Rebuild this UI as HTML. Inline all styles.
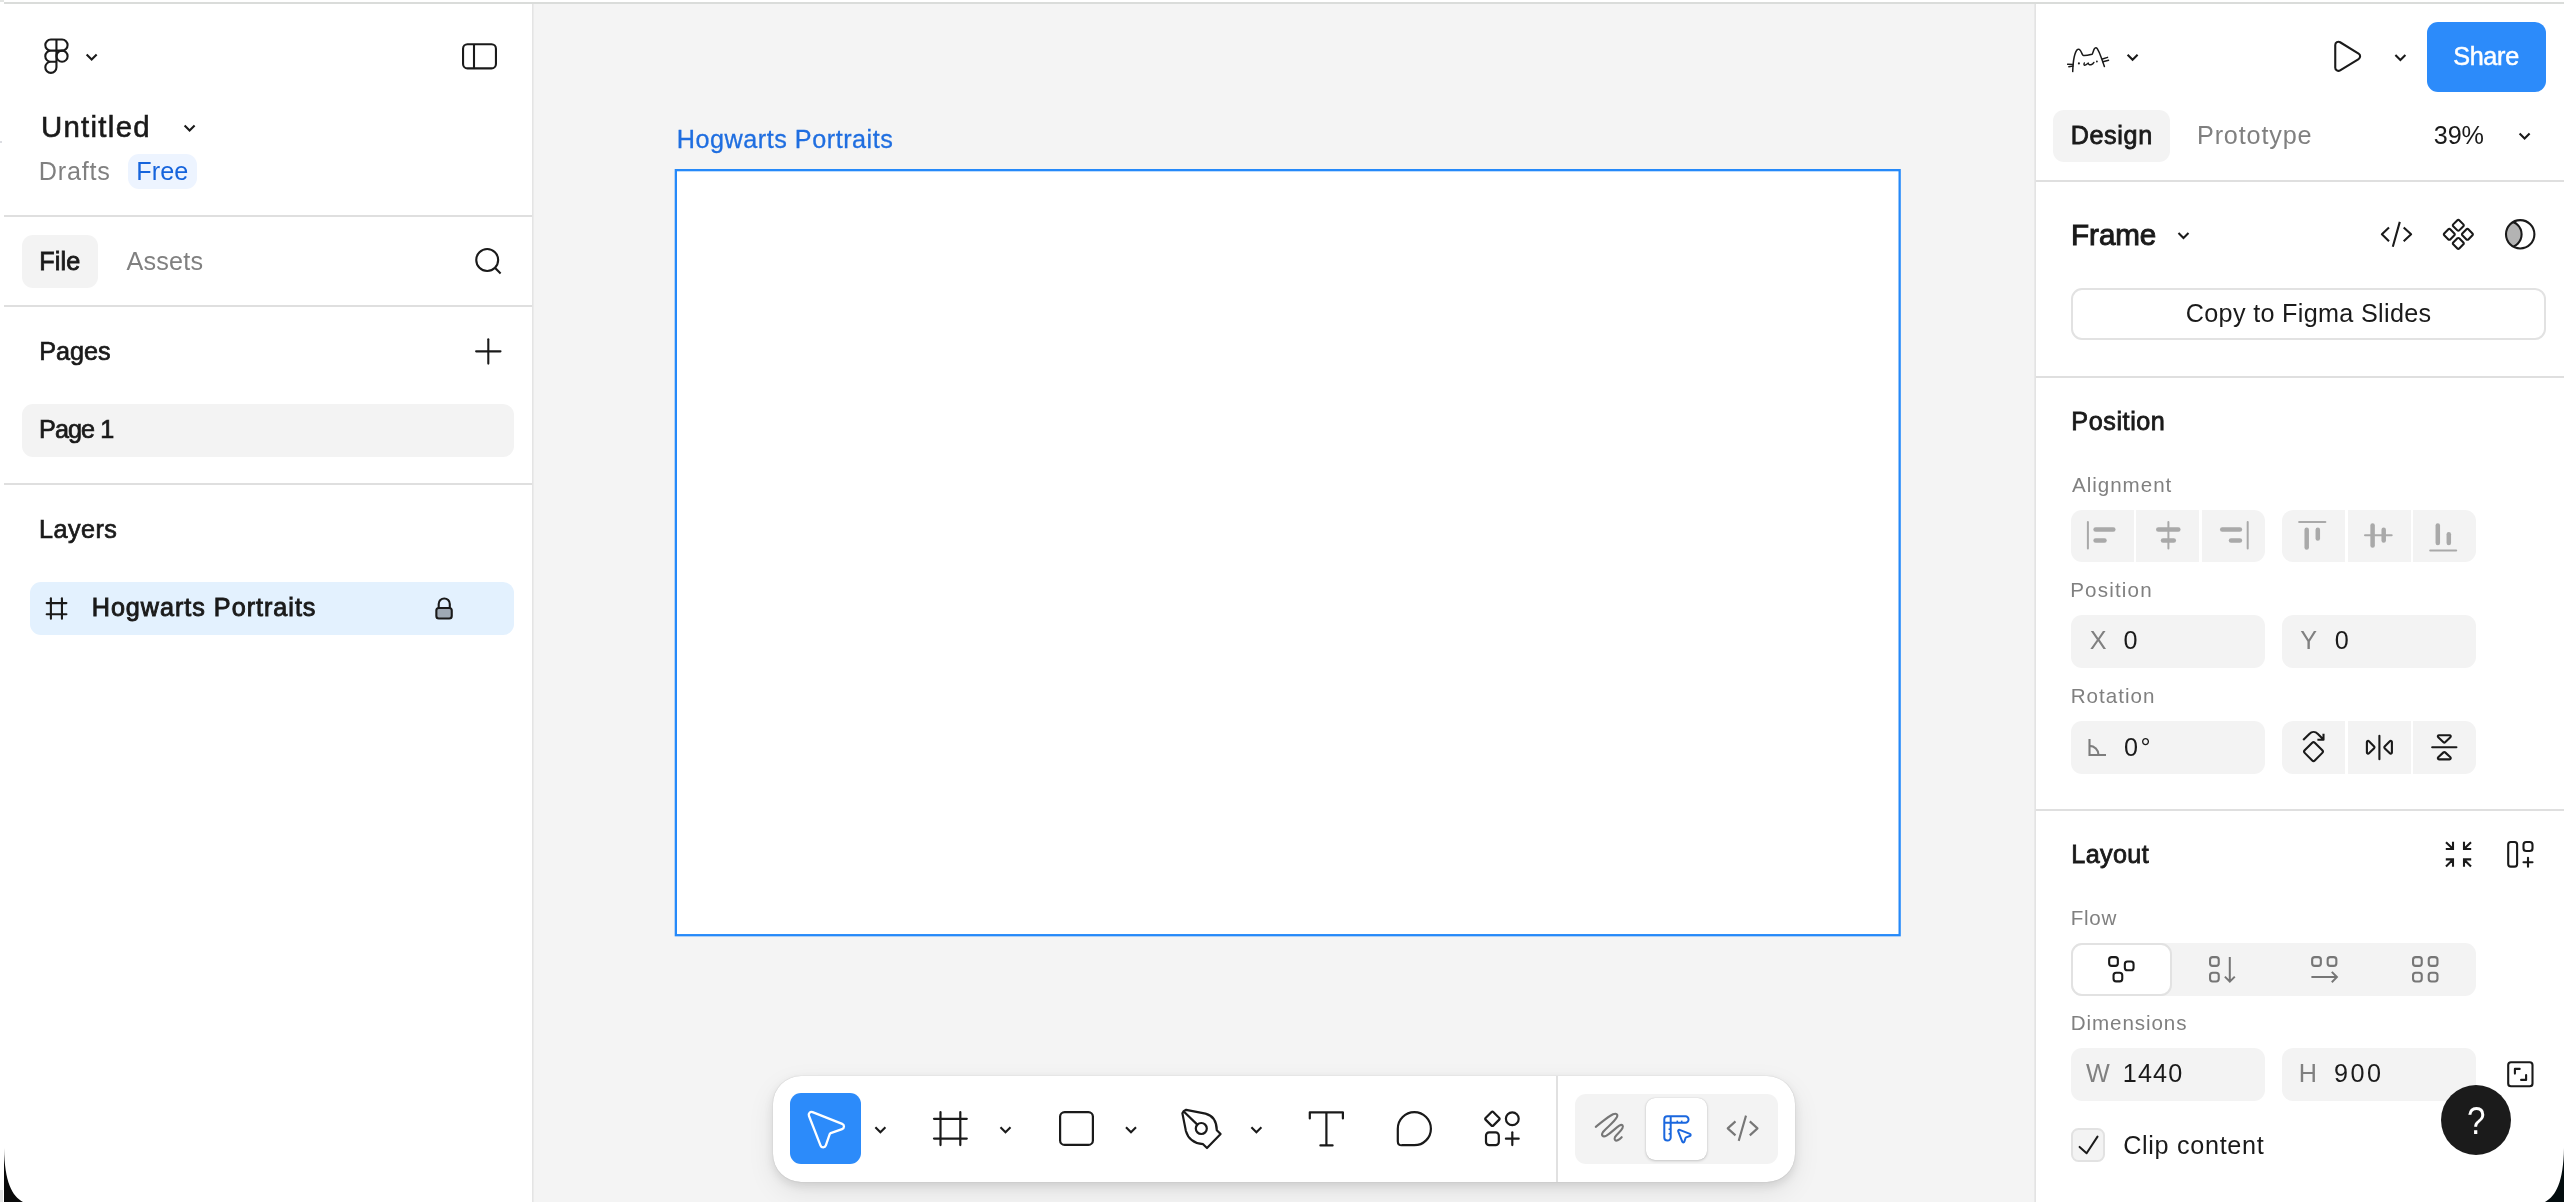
<!DOCTYPE html>
<html lang="en"><head><meta charset="utf-8"><title>Untitled – Figma</title>
<style>
html,body{margin:0;padding:0;}
body{width:2564px;height:1202px;overflow:hidden;background:#fff;position:relative;font-family:'Liberation Sans',sans-serif;}
.b{position:absolute;}
.t{position:absolute;white-space:pre;font-family:'Liberation Sans',sans-serif;}
#tx{position:absolute;left:0;top:0;width:2564px;height:1202px;will-change:transform;}
svg.ic{position:absolute;left:0;top:0;width:2564px;height:1202px;overflow:visible;}
</style></head><body>
<div class="b" style="left:534px;top:4px;width:1500px;height:1198px;background:#f4f4f4;"></div>
<div class="b" style="left:4px;top:2px;width:2560px;height:2px;background:#dadcda;"></div>
<div class="b" style="left:0px;top:0px;width:4px;height:2px;background:#e3e5e3;"></div>
<div class="b" style="left:0px;top:141px;width:2px;height:2px;background:#dcdde2;"></div>
<div class="b" style="left:0px;top:1190px;width:3px;height:12px;background:#e4e4e4;"></div>
<div class="b" style="left:532px;top:4px;width:1px;height:1198px;background:#e4e4e4;"></div>
<div class="b" style="left:533px;top:4px;width:1px;height:1198px;background:#ebebeb;"></div>
<div class="b" style="left:2034px;top:4px;width:1px;height:1198px;background:#e9e9e9;"></div>
<div class="b" style="left:2035px;top:4px;width:1px;height:1198px;background:#e3e3e3;"></div>
<div class="b" style="left:4px;top:215px;width:528px;height:2px;background:#dfdfdf;"></div>
<div class="b" style="left:4px;top:305px;width:528px;height:2px;background:#dfdfdf;"></div>
<div class="b" style="left:4px;top:483px;width:528px;height:2px;background:#dfdfdf;"></div>
<div class="b" style="left:128.2px;top:154.2px;width:68.6px;height:34.7px;background:#edf4ff;border-radius:11px;"></div>
<div class="b" style="left:22px;top:235px;width:76px;height:53px;background:#f3f3f3;border-radius:11px;"></div>
<div class="b" style="left:22px;top:404px;width:492px;height:53px;background:#f3f3f3;border-radius:11px;"></div>
<div class="b" style="left:30px;top:582px;width:484px;height:53px;background:#e3f1fe;border-radius:11px;"></div>
<div class="b" style="left:675px;top:169px;width:1226px;height:767px;background:#fff;"></div>
<div class="b" style="left:773px;top:1076px;width:1022px;height:106px;background:#fff;border-radius:28px;box-shadow:0 0 1px rgba(0,0,0,.25),0 4px 10px rgba(0,0,0,.10),0 10px 28px rgba(0,0,0,.08);"></div>
<div class="b" style="left:790px;top:1093.2px;width:71px;height:71px;background:#2c8bfa;border-radius:11px;"></div>
<div class="b" style="left:1556px;top:1076px;width:2px;height:106px;background:#e1e1e1;"></div>
<div class="b" style="left:1575px;top:1093.5px;width:203px;height:70.5px;background:#f3f3f3;border-radius:11px;"></div>
<div class="b" style="left:1646px;top:1098px;width:61px;height:62px;background:#fff;border-radius:9px;box-shadow:0 1px 3px rgba(0,0,0,.18),0 0 1px rgba(0,0,0,.2);"></div>
<div class="b" style="left:2036px;top:180px;width:528px;height:2px;background:#dfdfdf;"></div>
<div class="b" style="left:2036px;top:376px;width:528px;height:2px;background:#dfdfdf;"></div>
<div class="b" style="left:2036px;top:809px;width:528px;height:2px;background:#dfdfdf;"></div>
<div class="b" style="left:2427px;top:22px;width:119px;height:70px;background:#2c8bfa;border-radius:11px;"></div>
<div class="b" style="left:2053px;top:110px;width:117px;height:52px;background:#f3f3f3;border-radius:11px;"></div>
<div class="b" style="left:2071px;top:288px;width:475px;height:52px;background:#fff;border-radius:11px;border:2px solid #e2e2e2;box-sizing:border-box;"></div>
<div class="b" style="left:2071px;top:510px;width:194px;height:52px;background:#f3f3f3;border-radius:11px;"></div>
<div class="b" style="left:2282px;top:510px;width:194px;height:52px;background:#f3f3f3;border-radius:11px;"></div>
<div class="b" style="left:2133.8px;top:510px;width:2.2px;height:52px;background:#fff;"></div>
<div class="b" style="left:2199px;top:510px;width:3px;height:52px;background:#fff;"></div>
<div class="b" style="left:2345px;top:510px;width:2.9px;height:52px;background:#fff;"></div>
<div class="b" style="left:2410.9px;top:510px;width:2.3px;height:52px;background:#fff;"></div>
<div class="b" style="left:2071px;top:615px;width:194px;height:53px;background:#f3f3f3;border-radius:11px;"></div>
<div class="b" style="left:2282px;top:615px;width:194px;height:53px;background:#f3f3f3;border-radius:11px;"></div>
<div class="b" style="left:2071px;top:721px;width:194px;height:52.7px;background:#f3f3f3;border-radius:11px;"></div>
<div class="b" style="left:2282px;top:721px;width:194px;height:52.7px;background:#f3f3f3;border-radius:11px;"></div>
<div class="b" style="left:2345px;top:721px;width:2.9px;height:53px;background:#fff;"></div>
<div class="b" style="left:2410.9px;top:721px;width:2.3px;height:53px;background:#fff;"></div>
<div class="b" style="left:2071px;top:943px;width:405px;height:53px;background:#f3f3f3;border-radius:11px;"></div>
<div class="b" style="left:2071px;top:943px;width:100.7px;height:53px;background:#fff;border-radius:11px;border:2px solid #e2e2e2;box-sizing:border-box;"></div>
<div class="b" style="left:2071px;top:1048px;width:194px;height:53px;background:#f3f3f3;border-radius:11px;"></div>
<div class="b" style="left:2282px;top:1048px;width:194px;height:53px;background:#f3f3f3;border-radius:11px;"></div>
<div class="b" style="left:2071px;top:1128px;width:34.4px;height:34.4px;background:#f3f3f3;border-radius:7.5px;border:2px solid #e2e2e2;box-sizing:border-box;"></div>
<div class="b" style="left:2441px;top:1085px;width:70px;height:70px;background:#1b1b1b;border-radius:35px;"></div>
<svg class="ic" viewBox="0 0 2564 1202" fill="none" stroke-linecap="round" stroke-linejoin="round">
<rect x="675.85" y="170.15" width="1223.8" height="765.05" stroke="#2589f9" stroke-width="2.3" stroke-linejoin="miter"/>
<path d="M56.45,39.55 H50.849999999999994 A5.55,5.55 0 0 0 50.849999999999994,50.65 H56.45 M56.45,39.55 H62.05 A5.55,5.55 0 0 1 62.05,50.65 H56.45 M56.45,50.65 H50.849999999999994 A5.55,5.55 0 0 0 50.849999999999994,61.75 H56.45 M56.45,61.75 H50.849999999999994 A5.55,5.55 0 0 0 50.849999999999994,72.85 A5.55,5.55 0 0 0 56.45,67.3 V39.55" stroke="#1a1a1a" stroke-width="2.1" fill="none" />
<circle cx="62.05" cy="56.2" r="5.55" stroke="#1a1a1a" stroke-width="2.1"/>
<path d="M86.65,54.40 L91.65,59.40 L96.65,54.40" stroke="#1a1a1a" stroke-width="2.1" fill="none" stroke-linecap="butt" stroke-linejoin="miter"/>
<rect x="463.05" y="44.3" width="32.9" height="24.1" rx="4.4" stroke="#1a1a1a" stroke-width="2.1"/>
<path d="M474,44.3 L474,68.4" stroke="#1a1a1a" stroke-width="2.1" stroke-linecap="butt"/>
<path d="M184.60,125.40 L189.60,130.40 L194.60,125.40" stroke="#1a1a1a" stroke-width="2.1" fill="none" stroke-linecap="butt" stroke-linejoin="miter"/>
<circle cx="487.2" cy="260" r="10.95" stroke="#1a1a1a" stroke-width="2.1"/>
<path d="M494.9,267.7 L500.6,273.4" stroke="#1a1a1a" stroke-width="2.1" stroke-linecap="butt"/>
<path d="M476.1,351.35 L500.5,351.35" stroke="#1a1a1a" stroke-width="2.1" stroke-linecap="round"/>
<path d="M488.3,339.2 L488.3,363.6" stroke="#1a1a1a" stroke-width="2.1" stroke-linecap="round"/>
<path d="M50.9,598.2 L50.9,618.7" stroke="#1a1a1a" stroke-width="2.1" stroke-linecap="round"/>
<path d="M61.95,598.2 L61.95,618.7" stroke="#1a1a1a" stroke-width="2.1" stroke-linecap="round"/>
<path d="M46.7,603.1 L66.4,603.1" stroke="#1a1a1a" stroke-width="2.1" stroke-linecap="round"/>
<path d="M46.7,614.2 L66.4,614.2" stroke="#1a1a1a" stroke-width="2.1" stroke-linecap="round"/>
<path d="M438.7,608 V604 A5.55,5.55 0 0 1 449.8,604 V608" stroke="#1a1a1a" stroke-width="2.1" fill="none" />
<rect x="436.35" y="608" width="15.4" height="10.5" rx="2.5" stroke="#1a1a1a" stroke-width="2.1" fill="#9fa9b4"/>
<path d="M808.93,1115.78 A2.80,2.80 0 0 1 812.57,1112.15 L842.20,1123.84 A2.80,2.80 0 0 1 842.10,1129.09 L830.71,1133.07 A1.60,1.60 0 0 0 829.73,1134.07 L825.83,1145.47 A2.80,2.80 0 0 1 820.57,1145.58 Z" stroke="#fff" stroke-width="2.3" fill="none" />
<path d="M875.40,1127.30 L880.40,1132.30 L885.40,1127.30" stroke="#1a1a1a" stroke-width="2.1" fill="none" stroke-linecap="butt" stroke-linejoin="miter"/>
<path d="M1000.50,1127.30 L1005.50,1132.30 L1010.50,1127.30" stroke="#1a1a1a" stroke-width="2.1" fill="none" stroke-linecap="butt" stroke-linejoin="miter"/>
<path d="M1126.00,1127.30 L1131.00,1132.30 L1136.00,1127.30" stroke="#1a1a1a" stroke-width="2.1" fill="none" stroke-linecap="butt" stroke-linejoin="miter"/>
<path d="M1251.40,1127.30 L1256.40,1132.30 L1261.40,1127.30" stroke="#1a1a1a" stroke-width="2.1" fill="none" stroke-linecap="butt" stroke-linejoin="miter"/>
<path d="M940.5,1112.1 L940.5,1145.1" stroke="#1a1a1a" stroke-width="2.2" stroke-linecap="round"/>
<path d="M960.3,1112.1 L960.3,1145.1" stroke="#1a1a1a" stroke-width="2.2" stroke-linecap="round"/>
<path d="M934,1118.8 L966.8,1118.8" stroke="#1a1a1a" stroke-width="2.2" stroke-linecap="round"/>
<path d="M934,1138.6 L966.8,1138.6" stroke="#1a1a1a" stroke-width="2.2" stroke-linecap="round"/>
<rect x="1060.1" y="1112.1" width="32.8" height="32.8" rx="4.5" stroke="#1a1a1a" stroke-width="2.2"/>
<path d="M1183.6,1111.2 L1186.2,1109.8 L1205.5,1113.6 C1212.5,1115.3 1216.6,1121.5 1216.8,1130.2 L1220.6,1134 L1207,1148 L1203.1,1144.2 C1194,1143.4 1188,1138.5 1185.9,1131 L1182.4,1113.4 Z" stroke="#1a1a1a" stroke-width="2.2" fill="none" />
<circle cx="1201.3" cy="1128.5" r="5.5" stroke="#1a1a1a" stroke-width="2.2"/>
<path d="M1184,1111.8 L1197.3,1124.6" stroke="#1a1a1a" stroke-width="2.2" stroke-linecap="butt"/>
<path d="M1309.8,1118.4 V1112.3 H1342.9 V1118.4 M1326.4,1112.3 V1145.4 M1320.4,1145.4 H1332.6" stroke="#1a1a1a" stroke-width="2.2" fill="none" />
<path d="M1397.8,1128.65 A16.550000000000068,16.550000000000068 0 1 1 1414.35,1145.2000000000003 H1402.3 Q1397.8,1145.7 1397.8,1141.2 Z" stroke="#1a1a1a" stroke-width="2.2" fill="none" />
<path d="M1491.55,1111.95 A1.20,1.20 0 0 1 1493.25,1111.95 L1499.25,1117.95 A1.20,1.20 0 0 1 1499.25,1119.65 L1493.25,1125.65 A1.20,1.20 0 0 1 1491.55,1125.65 L1485.55,1119.65 A1.20,1.20 0 0 1 1485.55,1117.95 Z" stroke="#1a1a1a" stroke-width="2.2" fill="none" />
<circle cx="1512.3" cy="1118.8" r="6.4" stroke="#1a1a1a" stroke-width="2.2"/>
<rect x="1486.00" y="1132.30" width="12.8" height="12.8" rx="3.2" stroke="#1a1a1a" stroke-width="2.2" fill="none"/>
<path d="M1505.9,1138.7 L1518.7,1138.7" stroke="#1a1a1a" stroke-width="2.2" stroke-linecap="round"/>
<path d="M1512.3,1132.3 L1512.3,1145.1" stroke="#1a1a1a" stroke-width="2.2" stroke-linecap="round"/>
<path d="M1595.8,1126.8 C1602,1122 1608,1116.5 1613,1114.2 C1616.5,1112.8 1618.2,1114.5 1616.8,1117.3 C1614,1122.5 1607,1127 1603,1132 C1600.8,1135.2 1602.8,1137.6 1606.5,1135.6 C1611,1133 1615,1128.5 1619.3,1125.6 C1622.3,1123.8 1623.6,1125.8 1622.4,1128.2 C1620.6,1131.7 1616.6,1134 1614.9,1137.3 C1613.8,1139.8 1615.6,1141.3 1617.6,1140.3 C1619.2,1139.5 1620.5,1138.4 1621.7,1137.2" stroke="#767676" stroke-width="2.1" fill="none" />
<path d="M1667.3,1116.3 H1685.5 A3,3 0 0 1 1688.5,1119.3 V1119.7 A3,3 0 0 1 1685.5,1122.7 H1670.7 V1137.5 A3,3 0 0 1 1667.7,1140.5 H1667.3 A3,3 0 0 1 1664.3,1137.5 V1119.3 A3,3 0 0 1 1667.3,1116.3 Z M1670.7,1116.3 V1122.7 H1664.3" stroke="#1a67de" stroke-width="2.0" fill="none" />
<path d="M1677.3,1122.7 L1677.3,1120.6" stroke="#1a67de" stroke-width="1.6" stroke-linecap="butt"/>
<path d="M1681.7,1122.7 L1681.7,1120.6" stroke="#1a67de" stroke-width="1.6" stroke-linecap="butt"/>
<path d="M1670.7,1129.2 L1668.6,1129.2" stroke="#1a67de" stroke-width="1.6" stroke-linecap="butt"/>
<path d="M1670.7,1133.8 L1668.6,1133.8" stroke="#1a67de" stroke-width="1.6" stroke-linecap="butt"/>
<path d="M1678.21,1131.30 A1.10,1.10 0 0 1 1679.63,1129.87 L1689.96,1133.94 A1.10,1.10 0 0 1 1689.92,1136.01 L1686.07,1137.35 A0.70,0.70 0 0 0 1685.64,1137.79 L1684.33,1141.64 A1.10,1.10 0 0 1 1682.26,1141.68 Z" stroke="#1a67de" stroke-width="2.0" fill="none" />
<path d="M1735.5,1121.4 L1727.7,1128.4 L1735.5,1135.4 M1749.8,1121.4 L1757.5,1128.4 L1749.8,1135.4 M1746,1115.6 L1738.7,1140.9" stroke="#767676" stroke-width="2.1" fill="none" stroke-linecap="butt" stroke-linejoin="round"/>
<path d="M2072.7,71.6 C2072.9,66 2073.2,61.5 2074.2,57 C2075,53.5 2076,50.8 2077.3,49.6 C2078.6,48.6 2080,49.6 2081,51.5 C2081.8,53 2082.2,54.6 2083,55.3 C2084.5,56 2089,55 2092.2,54.3 C2093,52.5 2093.6,50 2094.3,48.8 C2095.2,47.3 2096.4,47.3 2097.4,48.8 C2099.5,52.3 2100.5,55.5 2101.5,58.2 C2102.7,61.5 2103.6,64.2 2104.4,66.6" stroke="#1a1a1a" stroke-width="1.5" fill="none" />
<path d="M2067.6,64.3 L2073,64.4 M2068.8,66.7 L2073,66 M2102.4,59 L2107.6,57.3 M2102.9,61.7 L2108.6,60.2" stroke="#1a1a1a" stroke-width="1.4" fill="none" />
<path d="M2084.3,63 C2083.6,64.6 2084,65.6 2085.2,65.2 C2086.6,64.7 2087.5,63.6 2088.3,63.1 C2088.6,64.6 2089.6,65 2091,64.7 C2092.5,64.3 2093.4,63.4 2093.9,62.4" stroke="#1a1a1a" stroke-width="1.4" fill="none" />
<circle cx="2078.9" cy="63.4" r="1.05" fill="#1a1a1a"/><circle cx="2096.9" cy="61.5" r="0.9" fill="#1a1a1a"/>
<path d="M2127.60,54.80 L2132.60,59.80 L2137.60,54.80" stroke="#1a1a1a" stroke-width="2.1" fill="none" stroke-linecap="butt" stroke-linejoin="miter"/>
<path d="M2335.25,44.97 A3.20,3.20 0 0 1 2340.12,42.24 L2358.60,53.57 A3.20,3.20 0 0 1 2358.60,59.03 L2340.12,70.36 A3.20,3.20 0 0 1 2335.25,67.63 Z" stroke="#1a1a1a" stroke-width="2.1" fill="none" />
<path d="M2395.40,55.00 L2400.40,60.00 L2405.40,55.00" stroke="#1a1a1a" stroke-width="2.1" fill="none" stroke-linecap="butt" stroke-linejoin="miter"/>
<path d="M2519.60,133.40 L2524.60,138.40 L2529.60,133.40" stroke="#1a1a1a" stroke-width="2.1" fill="none" stroke-linecap="butt" stroke-linejoin="miter"/>
<path d="M2178.50,232.90 L2183.50,237.90 L2188.50,232.90" stroke="#1a1a1a" stroke-width="2.1" fill="none" stroke-linecap="butt" stroke-linejoin="miter"/>
<path d="M2389,227.5 L2381.9,234.3 L2389,241.2 M2403.7,227.5 L2411.1,234.3 L2403.7,241.2 M2399.8,221.9 L2392.8,246.8" stroke="#1a1a1a" stroke-width="2.1" fill="none" stroke-linecap="butt" stroke-linejoin="round"/>
<path d="M2457.38,220.22 A1.30,1.30 0 0 1 2459.22,220.22 L2463.38,224.38 A1.30,1.30 0 0 1 2463.38,226.22 L2459.22,230.38 A1.30,1.30 0 0 1 2457.38,230.38 L2453.22,226.22 A1.30,1.30 0 0 1 2453.22,224.38 Z" stroke="#1a1a1a" stroke-width="2.1" fill="none" />
<path d="M2457.38,238.32 A1.30,1.30 0 0 1 2459.22,238.32 L2463.38,242.48 A1.30,1.30 0 0 1 2463.38,244.32 L2459.22,248.48 A1.30,1.30 0 0 1 2457.38,248.48 L2453.22,244.32 A1.30,1.30 0 0 1 2453.22,242.48 Z" stroke="#1a1a1a" stroke-width="2.1" fill="none" />
<path d="M2448.38,229.27 A1.30,1.30 0 0 1 2450.22,229.27 L2454.38,233.43 A1.30,1.30 0 0 1 2454.38,235.27 L2450.22,239.43 A1.30,1.30 0 0 1 2448.38,239.43 L2444.22,235.27 A1.30,1.30 0 0 1 2444.22,233.43 Z" stroke="#1a1a1a" stroke-width="2.1" fill="none" />
<path d="M2466.48,229.27 A1.30,1.30 0 0 1 2468.32,229.27 L2472.48,233.43 A1.30,1.30 0 0 1 2472.48,235.27 L2468.32,239.43 A1.30,1.30 0 0 1 2466.48,239.43 L2462.32,235.27 A1.30,1.30 0 0 1 2462.32,233.43 Z" stroke="#1a1a1a" stroke-width="2.1" fill="none" />
<clipPath id="mk"><circle cx="2520.2" cy="234.3" r="14.2"/></clipPath>
<circle cx="2508.4" cy="234.3" r="13.2" fill="#b3b3b3" stroke="#1a1a1a" stroke-width="2.1" clip-path="url(#mk)"/>
<circle cx="2520.2" cy="234.3" r="14.2" stroke="#1a1a1a" stroke-width="2.1"/>
<path d="M2087.9,522 L2087.9,548.6" stroke="#a9a9a9" stroke-width="2.0" stroke-linecap="round"/>
<path d="M2095.6,529.6 L2113.3,529.6" stroke="#a9a9a9" stroke-width="4.5" stroke-linecap="round"/>
<path d="M2095.6,540.6 L2104.5,540.6" stroke="#a9a9a9" stroke-width="4.5" stroke-linecap="round"/>
<path d="M2168.4,522 L2168.4,548.6" stroke="#a9a9a9" stroke-width="2.0" stroke-linecap="round"/>
<path d="M2158.3,529.6 L2178.3,529.6" stroke="#a9a9a9" stroke-width="4.5" stroke-linecap="round"/>
<path d="M2163,540.6 L2173.8,540.6" stroke="#a9a9a9" stroke-width="4.5" stroke-linecap="round"/>
<path d="M2247.7,522 L2247.7,548.6" stroke="#a9a9a9" stroke-width="2.0" stroke-linecap="round"/>
<path d="M2222.2,529.6 L2239.9,529.6" stroke="#a9a9a9" stroke-width="4.5" stroke-linecap="round"/>
<path d="M2231,540.6 L2239.9,540.6" stroke="#a9a9a9" stroke-width="4.5" stroke-linecap="round"/>
<path d="M2299.1,522 L2325.4,522" stroke="#a9a9a9" stroke-width="2.0" stroke-linecap="round"/>
<path d="M2306.7,529.7 L2306.7,547.4" stroke="#a9a9a9" stroke-width="4.5" stroke-linecap="round"/>
<path d="M2317.8,529.7 L2317.8,538.6" stroke="#a9a9a9" stroke-width="4.5" stroke-linecap="round"/>
<path d="M2365,535.3 L2391.7,535.3" stroke="#a9a9a9" stroke-width="2.0" stroke-linecap="round"/>
<path d="M2372.6,525.4 L2372.6,545.4" stroke="#a9a9a9" stroke-width="4.5" stroke-linecap="round"/>
<path d="M2383.7,529.7 L2383.7,540.6" stroke="#a9a9a9" stroke-width="4.5" stroke-linecap="round"/>
<path d="M2430.2,550.6 L2456.2,550.6" stroke="#a9a9a9" stroke-width="2.0" stroke-linecap="round"/>
<path d="M2437.8,525.4 L2437.8,542.9" stroke="#a9a9a9" stroke-width="4.5" stroke-linecap="round"/>
<path d="M2448.8,534.2 L2448.8,542.9" stroke="#a9a9a9" stroke-width="4.5" stroke-linecap="round"/>
<path d="M2089.5,738.9 V754.95 H2106 M2089.5,745.9 A9,9 0 0 1 2098.5,754.95" stroke="#7d7d7d" stroke-width="2.1" fill="none" stroke-linecap="butt" stroke-linejoin="miter"/>
<path d="M2312.23,742.77 A1.80,1.80 0 0 1 2314.77,742.77 L2322.33,750.33 A1.80,1.80 0 0 1 2322.33,752.87 L2314.77,760.43 A1.80,1.80 0 0 1 2312.23,760.43 L2304.67,752.87 A1.80,1.80 0 0 1 2304.67,750.33 Z" stroke="#1a1a1a" stroke-width="2.1" fill="none" />
<path d="M2303.2,740 L2309.3,733.9 C2311.8,731.4 2315.4,731.4 2317.9,733.9 L2323.4,739.4 M2323.5,733.7 V739.8 H2317.4" stroke="#1a1a1a" stroke-width="2.1" fill="none" stroke-linecap="butt"/>
<path d="M2379.4,735.8 L2379.4,759.2" stroke="#1a1a1a" stroke-width="2.1" stroke-linecap="round"/>
<path d="M2366.90,742.10 A1.20,1.20 0 0 1 2368.95,741.25 L2374.15,746.45 A1.20,1.20 0 0 1 2374.15,748.15 L2368.95,753.35 A1.20,1.20 0 0 1 2366.90,752.50 Z" stroke="#1a1a1a" stroke-width="2.1" fill="none" />
<path d="M2391.90,742.10 A1.20,1.20 0 0 0 2389.85,741.25 L2384.65,746.45 A1.20,1.20 0 0 0 2384.65,748.15 L2389.85,753.35 A1.20,1.20 0 0 0 2391.90,752.50 Z" stroke="#1a1a1a" stroke-width="2.1" fill="none" />
<path d="M2432.2,747.3 L2456.4,747.3" stroke="#1a1a1a" stroke-width="2.1" stroke-linecap="round"/>
<path d="M2438.21,737.27 A1.20,1.20 0 0 1 2439.03,735.20 L2449.57,735.20 A1.20,1.20 0 0 1 2450.39,737.27 L2445.12,742.23 A1.20,1.20 0 0 1 2443.48,742.23 Z" stroke="#1a1a1a" stroke-width="2.1" fill="none" />
<path d="M2438.21,757.33 A1.20,1.20 0 0 0 2439.03,759.40 L2449.57,759.40 A1.20,1.20 0 0 0 2450.39,757.33 L2445.12,752.37 A1.20,1.20 0 0 0 2443.48,752.37 Z" stroke="#1a1a1a" stroke-width="2.1" fill="none" />
<path d="M2446,842.3 L2453,849 M2453,841.8 V849 H2445.8 M2471,842.3 L2464,849 M2464,841.8 V849 H2471.2 M2446,866.5 L2453,859.4 M2453,866.7 V859.4 H2445.8 M2471,866.5 L2464,859.4 M2464,866.7 V859.4 H2471.2" stroke="#1a1a1a" stroke-width="2.1" fill="none" stroke-linecap="butt" stroke-linejoin="miter"/>
<rect x="2508.2" y="842" width="8.9" height="24.6" rx="2.6" stroke="#1a1a1a" stroke-width="2.1"/>
<rect x="2523.5" y="842" width="9" height="9" rx="2.8" stroke="#1a1a1a" stroke-width="2.1"/>
<path d="M2523.5,862.2 L2532.5,862.2" stroke="#1a1a1a" stroke-width="2.1" stroke-linecap="round"/>
<path d="M2528,857.7 L2528,866.7" stroke="#1a1a1a" stroke-width="2.1" stroke-linecap="round"/>
<rect x="2109.15" y="957.15" width="8.7" height="8.7" rx="2.6" stroke="#1a1a1a" stroke-width="2.1" fill="none"/>
<rect x="2124.85" y="961.55" width="8.7" height="8.7" rx="2.6" stroke="#1a1a1a" stroke-width="2.1" fill="none"/>
<rect x="2113.55" y="972.70" width="8.7" height="8.7" rx="2.6" stroke="#1a1a1a" stroke-width="2.1" fill="none"/>
<rect x="2210.05" y="957.15" width="8.7" height="8.7" rx="2.6" stroke="#767676" stroke-width="2.1" fill="none"/>
<rect x="2210.05" y="972.75" width="8.7" height="8.7" rx="2.6" stroke="#767676" stroke-width="2.1" fill="none"/>
<path d="M2229.8,957 V981.6 M2224.9,976.6 L2229.8,981.6 L2234.8,976.6" stroke="#767676" stroke-width="2.0" fill="none" stroke-linecap="butt" stroke-linejoin="miter"/>
<rect x="2312.15" y="957.15" width="8.7" height="8.7" rx="2.6" stroke="#767676" stroke-width="2.1" fill="none"/>
<rect x="2327.65" y="957.15" width="8.7" height="8.7" rx="2.6" stroke="#767676" stroke-width="2.1" fill="none"/>
<path d="M2311.4,977.1 H2336.8 M2331.8,971.9 L2336.9,977.1 L2331.8,982.3" stroke="#767676" stroke-width="2.0" fill="none" stroke-linecap="butt" stroke-linejoin="miter"/>
<rect x="2413.05" y="957.15" width="8.7" height="8.7" rx="2.6" stroke="#767676" stroke-width="2.1" fill="none"/>
<rect x="2413.05" y="972.75" width="8.7" height="8.7" rx="2.6" stroke="#767676" stroke-width="2.1" fill="none"/>
<rect x="2428.75" y="957.15" width="8.7" height="8.7" rx="2.6" stroke="#767676" stroke-width="2.1" fill="none"/>
<rect x="2428.75" y="972.75" width="8.7" height="8.7" rx="2.6" stroke="#767676" stroke-width="2.1" fill="none"/>
<rect x="2508.2" y="1062.3" width="24.3" height="24" rx="2.8" stroke="#1a1a1a" stroke-width="2.1"/>
<path d="M2514.9,1073.6 V1068.9 H2519.7 M2521.1,1079.9 H2526.1 V1075" stroke="#1a1a1a" stroke-width="2.1" fill="none" />
<path d="M2079.6,1146.9 L2086.6,1153.3 L2097.5,1136.6" stroke="#1a1a1a" stroke-width="2.0" fill="none" />
<path d="M4,1148 C4.6,1182 12,1196 23,1202 L4,1202 Z" fill="#0a0a0a" stroke="none"/>
<path d="M2564,1148 C2563.4,1182 2556,1196 2545,1202 L2564,1202 Z" fill="#030c0e" stroke="none"/>
</svg>
<div id="tx">
<div class="t" style="left:40.95px;top:111.81px;font-size:29.4px;line-height:29.4px;color:#1a1a1a;letter-spacing:1.292px;-webkit-text-stroke:0.6px #1a1a1a;">Untitled</div>
<div class="t" style="left:38.81px;top:158.57px;font-size:25.2px;line-height:25.2px;color:#808080;letter-spacing:0.777px;">Drafts</div>
<div class="t" style="left:136.25px;top:158.57px;font-size:25.2px;line-height:25.2px;color:#1664dc;letter-spacing:0.111px;">Free</div>
<div class="t" style="left:39.14px;top:248.67px;font-size:25.2px;line-height:25.2px;color:#1a1a1a;letter-spacing:0.146px;-webkit-text-stroke:0.8px #1a1a1a;">File</div>
<div class="t" style="left:126.40px;top:248.67px;font-size:25.2px;line-height:25.2px;color:#808080;letter-spacing:0.220px;">Assets</div>
<div class="t" style="left:39.21px;top:338.67px;font-size:25.2px;line-height:25.2px;color:#1a1a1a;letter-spacing:-0.028px;-webkit-text-stroke:0.7px #1a1a1a;">Pages</div>
<div class="t" style="left:39.09px;top:416.77px;font-size:25.2px;line-height:25.2px;color:#1a1a1a;letter-spacing:-0.943px;-webkit-text-stroke:0.7px #1a1a1a;">Page 1</div>
<div class="t" style="left:39.09px;top:516.57px;font-size:25.2px;line-height:25.2px;color:#1a1a1a;letter-spacing:0.458px;-webkit-text-stroke:0.7px #1a1a1a;">Layers</div>
<div class="t" style="left:91.73px;top:594.57px;font-size:25.2px;line-height:25.2px;color:#1a1a1a;letter-spacing:0.975px;-webkit-text-stroke:0.9px #1a1a1a;">Hogwarts Portraits</div>
<div class="t" style="left:676.80px;top:126.67px;font-size:25.2px;line-height:25.2px;color:#1f6ee0;letter-spacing:0.521px;-webkit-text-stroke:0.3px #1f6ee0;">Hogwarts Portraits</div>
<div class="t" style="left:2453.13px;top:43.57px;font-size:25.2px;line-height:25.2px;color:#fff;letter-spacing:-0.282px;-webkit-text-stroke:0.5px #fff;">Share</div>
<div class="t" style="left:2070.63px;top:122.57px;font-size:25.2px;line-height:25.2px;color:#1a1a1a;letter-spacing:0.628px;-webkit-text-stroke:0.8px #1a1a1a;">Design</div>
<div class="t" style="left:2197.00px;top:122.57px;font-size:25.2px;line-height:25.2px;color:#808080;letter-spacing:0.839px;">Prototype</div>
<div class="t" style="left:2433.87px;top:123.07px;font-size:25.2px;line-height:25.2px;color:#1a1a1a;letter-spacing:-0.217px;">39%</div>
<div class="t" style="left:2071.08px;top:219.84px;font-size:29.6px;line-height:29.6px;color:#1a1a1a;letter-spacing:-0.067px;-webkit-text-stroke:1.0px #1a1a1a;">Frame</div>
<div class="t" style="left:2185.81px;top:300.57px;font-size:25.2px;line-height:25.2px;color:#1a1a1a;letter-spacing:0.313px;">Copy to Figma Slides</div>
<div class="t" style="left:2071.34px;top:408.87px;font-size:25.2px;line-height:25.2px;color:#1a1a1a;letter-spacing:0.562px;-webkit-text-stroke:0.8px #1a1a1a;">Position</div>
<div class="t" style="left:2071.94px;top:474.56px;font-size:20.6px;line-height:20.6px;color:#808080;letter-spacing:0.972px;">Alignment</div>
<div class="t" style="left:2070.14px;top:579.76px;font-size:20.6px;line-height:20.6px;color:#808080;letter-spacing:1.182px;">Position</div>
<div class="t" style="left:2089.82px;top:628.27px;font-size:25.2px;line-height:25.2px;color:#808080;">X</div>
<div class="t" style="left:2123.58px;top:628.27px;font-size:25.2px;line-height:25.2px;color:#1a1a1a;">0</div>
<div class="t" style="left:2300.23px;top:628.27px;font-size:25.2px;line-height:25.2px;color:#808080;">Y</div>
<div class="t" style="left:2334.84px;top:628.27px;font-size:25.2px;line-height:25.2px;color:#1a1a1a;">0</div>
<div class="t" style="left:2070.74px;top:685.56px;font-size:20.6px;line-height:20.6px;color:#808080;letter-spacing:1.010px;">Rotation</div>
<div class="t" style="left:2123.91px;top:734.77px;font-size:25.2px;line-height:25.2px;color:#1a1a1a;letter-spacing:2.660px;">0°</div>
<div class="t" style="left:2071.34px;top:841.67px;font-size:25.2px;line-height:25.2px;color:#1a1a1a;letter-spacing:0.335px;-webkit-text-stroke:0.8px #1a1a1a;">Layout</div>
<div class="t" style="left:2070.67px;top:907.66px;font-size:20.6px;line-height:20.6px;color:#808080;letter-spacing:0.743px;">Flow</div>
<div class="t" style="left:2070.74px;top:1012.76px;font-size:20.6px;line-height:20.6px;color:#808080;letter-spacing:0.905px;">Dimensions</div>
<div class="t" style="left:2086.10px;top:1060.87px;font-size:25.2px;line-height:25.2px;color:#808080;">W</div>
<div class="t" style="left:2122.73px;top:1060.87px;font-size:25.2px;line-height:25.2px;color:#1a1a1a;letter-spacing:1.153px;">1440</div>
<div class="t" style="left:2298.69px;top:1060.87px;font-size:25.2px;line-height:25.2px;color:#808080;">H</div>
<div class="t" style="left:2333.93px;top:1060.87px;font-size:25.2px;line-height:25.2px;color:#1a1a1a;letter-spacing:2.564px;">900</div>
<div class="t" style="left:2123.16px;top:1132.57px;font-size:25.2px;line-height:25.2px;color:#1a1a1a;letter-spacing:0.686px;">Clip content</div>
<div class="t" style="left:2466.56px;top:1100.76px;font-size:39.5px;line-height:39.5px;color:#fff;transform:scaleX(0.84);transform-origin:0 0;">?</div>
</div>
</body></html>
